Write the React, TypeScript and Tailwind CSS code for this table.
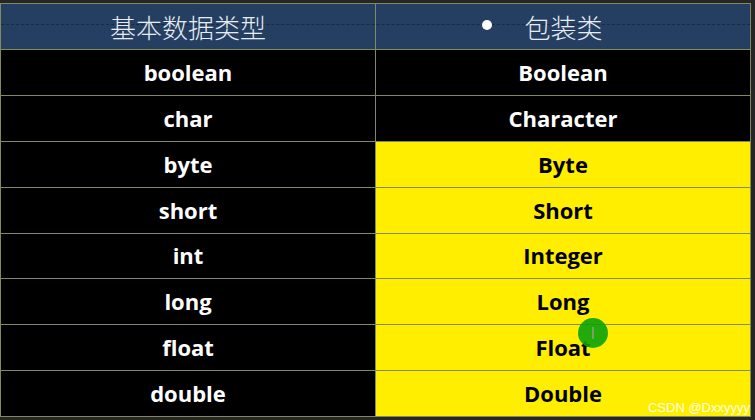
import React from "react";

const rows: [string, string, boolean][] = [
  ["boolean", "Boolean", false],
  ["char", "Character", false],
  ["byte", "Byte", true],
  ["short", "Short", true],
  ["int", "Integer", true],
  ["long", "Long", true],
  ["float", "Float", true],
  ["double", "Double", true],
];

export default function App() {
  return (
    <div className="relative w-[755px] h-[420px] bg-[#262626] pt-[3px] overflow-hidden" style={{ fontFamily: "'Open Sans', sans-serif" }}>
      <div className="w-[751px] border border-[#808b60] bg-black">
        <div className="relative grid grid-cols-[375px_1fr] h-[45px] bg-[#253f63]">
          <div className="absolute left-0 right-0 top-[20px] border-t border-dashed border-[#1a2a40]" />
          <div className="relative flex items-center justify-center border-r border-[#808b60] text-[26px] text-[#e6ecf2] font-light" style={{ fontFamily: "'Noto Sans CJK SC', sans-serif" }}>
            基本数据类型
          </div>
          <div className="relative flex items-center justify-center text-[26px] text-[#e6ecf2] font-light" style={{ fontFamily: "'Noto Sans CJK SC', sans-serif" }}>
            <div className="flex items-center gap-[32px] pr-[41px]">
              <div className="block shrink-0 w-[10px] h-[10px] min-w-[10px] rounded-full bg-white -mt-[4px]" />
              <span>包装类</span>
            </div>
          </div>
        </div>
        {rows.map(([a, b, y]) => (
          <div key={a} className="grid grid-cols-[375px_1fr] h-[45.875px] border-t border-[#808b60]">
            <div className="flex items-center justify-center border-r border-[#808b60] text-white text-[22px] font-bold">
              {a}
            </div>
            <div className={`flex items-center justify-center text-[22px] font-bold ${y ? "bg-[#ffee00] text-black" : "bg-black text-white"}`}>
              {b}
            </div>
          </div>
        ))}
      </div>
      <div className="absolute left-[578px] top-[318px] w-[30px] h-[30px] rounded-full bg-[#0aa30a] opacity-90 flex items-center justify-center">
        <span className="w-[2px] h-[12px] bg-[#6a9a6a]" />
      </div>
      <div className="absolute right-[5px] bottom-[3px] text-[13px] text-white/90" style={{ fontFamily: "'Liberation Sans', sans-serif" }}>
        CSDN @Dxxyyyy
      </div>
    </div>
  );
}
